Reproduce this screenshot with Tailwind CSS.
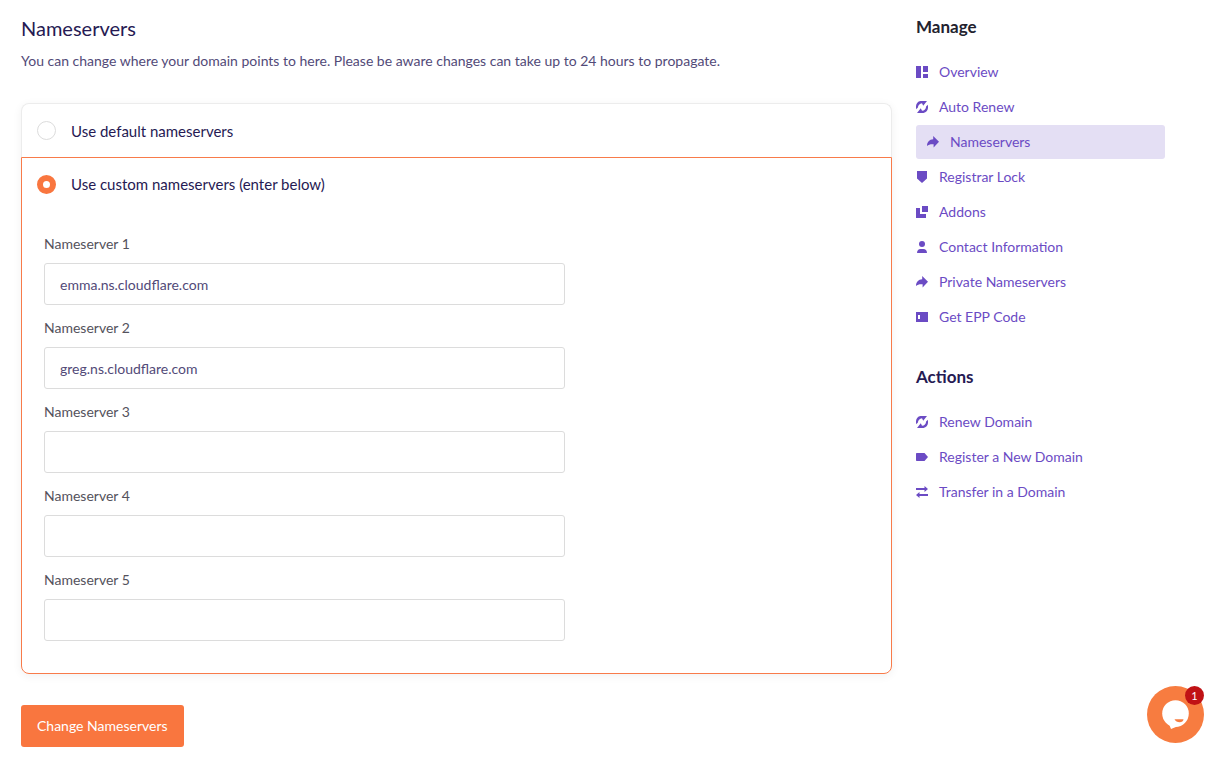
<!DOCTYPE html>
<html lang="en">
  <head>
    <meta charset="UTF-8" />
    <meta name="viewport" content="width=device-width, initial-scale=1.0" />
    <title>Nameservers</title>
    <script src="https://cdn.jsdelivr.net/npm/@tailwindcss/browser@4"></script>
  </head>
  <body class="bg-white font-['Lato','Open_Sans',sans-serif] text-sm leading-5 text-[#524a78]">
    <!-- shared icon shapes -->
    <svg class="hidden">
      <symbol id="icon-dashboard" viewBox="0 0 12 12">
        <path d="M0 0h5v12H0zM7 0h5v6H7zM7 8h5v4H7z" />
      </symbol>
      <symbol id="icon-renew" viewBox="0 0 12 12">
        <path d="M4.500 0H11L7.200 4.800 6 2.200C3.600 2.600 2 4.200 1.900 6.600L.3 8.200C-.8 4.200.8.600 4.500 0z" />
        <path d="M7.500 12H1l3.800-4.800L6 9.800c2.400-.4 4-2 4.100-4.400l1.600-1.600C12.800 7.800 11.200 11.400 7.500 12z" />
      </symbol>
      <symbol id="icon-share" viewBox="0 0 12 12">
        <path d="M6.200 0 12 5.800 6.600 11.500V8.200C3.800 8 1.600 8.300 0 10 0 6 2.400 3.300 6.200 3.200z" />
      </symbol>
      <symbol id="icon-shield" viewBox="0 0 12 12">
        <path d="M1 0h10V7.500L6 12 1 7.500z" />
      </symbol>
      <symbol id="icon-addons" viewBox="0 0 12 12">
        <path d="M6 0h6v6H6zM0 2h4v6h6v4H0z" />
      </symbol>
      <symbol id="icon-user" viewBox="0 0 12 12">
        <circle cx="6" cy="3" r="3" />
        <path d="M1 12c0-2.600 1.600-4 3.500-4h3C9.400 8 11 9.400 11 12z" />
      </symbol>
      <symbol id="icon-card" viewBox="0 0 12 12">
        <path fill-rule="evenodd" d="M0 1h12v10H0zM2 4v4h2V4z" />
      </symbol>
      <symbol id="icon-label" viewBox="0 0 12 12">
        <path d="M.6 2H8.500L12 6 8.500 10H.6L0 9.400V2.600z" />
      </symbol>
      <symbol id="icon-transfer" viewBox="0 0 12 12">
        <path d="M0 2h8.500V0L12 3 8.500 6V4H0zM12 8H3.500V6L0 9l3.500 3V10H12z" />
      </symbol>
    </svg>

    <div class="flex gap-6 pl-[21px] pr-[45px] pt-4 pb-[14px]">
      <main class="flex-1">
        <h1 class="text-xl leading-6 text-[#261a53]">Nameservers</h1>
        <p class="mt-[11px]">You can change where your domain points to here. Please be aware changes can take up to 24 hours to propagate.</p>

        <form class="mt-8">
          <div class="rounded-lg shadow-[0_2px_10px_rgba(0,0,0,0.06)]">
            <label class="flex h-[54px] items-center gap-[15px] rounded-t-lg border border-b-0 border-[#ececec] px-[15px] text-[15px] text-[#261a53]">
              <input type="radio" name="ns" class="size-[19px] appearance-none rounded-full border border-[#dcdcdc] bg-white" />
              Use default nameservers
            </label>

            <div class="rounded-b-lg border border-[#f87b4a] pb-8">
              <label class="flex h-[52px] items-center gap-[15px] px-[15px] text-[15px] text-[#261a53]">
                <input type="radio" name="ns" checked class="size-[19px] appearance-none rounded-full border-[6px] border-[#f9763f] bg-white" />
                Use custom nameservers (enter below)
              </label>

              <div class="mt-6 flex w-[62.5%] flex-col gap-[13px] pl-[22px]">
                <div>
                  <label for="ns1" class="block text-[#54525c]">Nameserver 1</label>
                  <input id="ns1" type="text" value="emma.ns.cloudflare.com" class="mt-[9px] block h-[42px] w-full rounded-[3px] border border-[#dcdcdc] px-[15px]" />
                </div>
                <div>
                  <label for="ns2" class="block text-[#54525c]">Nameserver 2</label>
                  <input id="ns2" type="text" value="greg.ns.cloudflare.com" class="mt-[9px] block h-[42px] w-full rounded-[3px] border border-[#dcdcdc] px-[15px]" />
                </div>
                <div>
                  <label for="ns3" class="block text-[#54525c]">Nameserver 3</label>
                  <input id="ns3" type="text" class="mt-[9px] block h-[42px] w-full rounded-[3px] border border-[#dcdcdc] px-[15px]" />
                </div>
                <div>
                  <label for="ns4" class="block text-[#54525c]">Nameserver 4</label>
                  <input id="ns4" type="text" class="mt-[9px] block h-[42px] w-full rounded-[3px] border border-[#dcdcdc] px-[15px]" />
                </div>
                <div>
                  <label for="ns5" class="block text-[#54525c]">Nameserver 5</label>
                  <input id="ns5" type="text" class="mt-[9px] block h-[42px] w-full rounded-[3px] border border-[#dcdcdc] px-[15px]" />
                </div>
              </div>
            </div>
          </div>

          <button type="submit" class="mt-[31px] h-[42px] rounded-[3px] bg-[#f9763f] px-4 text-white hover:bg-[#ee6830]">Change Nameservers</button>
        </form>
      </main>

      <aside class="w-[249px] shrink-0 text-[#6b4bc4]">
        <h2 class="text-[17px] leading-[22px] font-bold text-[#23222e]">Manage</h2>
        <nav class="mt-[17px] flex flex-col gap-px">
          <a href="#" class="flex h-[34px] items-center gap-[11px]"><svg class="size-3 fill-current"><use href="#icon-dashboard" /></svg>Overview</a>
          <a href="#" class="flex h-[34px] items-center gap-[11px]"><svg class="size-3 fill-current"><use href="#icon-renew" /></svg>Auto Renew</a>
          <a href="#" class="flex h-[34px] items-center gap-[11px] rounded-[3px] bg-[#e4dff4] px-[11px]"><svg class="size-3 fill-current"><use href="#icon-share" /></svg>Nameservers</a>
          <a href="#" class="flex h-[34px] items-center gap-[11px]"><svg class="size-3 fill-current"><use href="#icon-shield" /></svg>Registrar Lock</a>
          <a href="#" class="flex h-[34px] items-center gap-[11px]"><svg class="size-3 fill-current"><use href="#icon-addons" /></svg>Addons</a>
          <a href="#" class="flex h-[34px] items-center gap-[11px]"><svg class="size-3 fill-current"><use href="#icon-user" /></svg>Contact Information</a>
          <a href="#" class="flex h-[34px] items-center gap-[11px]"><svg class="size-3 fill-current"><use href="#icon-share" /></svg>Private Nameservers</a>
          <a href="#" class="flex h-[34px] items-center gap-[11px]"><svg class="size-3 fill-current"><use href="#icon-card" /></svg>Get EPP Code</a>
        </nav>

        <h2 class="mt-8 text-[17px] leading-[22px] font-bold text-[#261a53]">Actions</h2>
        <nav class="mt-[17px] flex flex-col gap-px">
          <a href="#" class="flex h-[34px] items-center gap-[11px]"><svg class="size-3 fill-current"><use href="#icon-renew" /></svg>Renew Domain</a>
          <a href="#" class="flex h-[34px] items-center gap-[11px]"><svg class="size-3 fill-current"><use href="#icon-label" /></svg>Register a New Domain</a>
          <a href="#" class="flex h-[34px] items-center gap-[11px]"><svg class="size-3 fill-current"><use href="#icon-transfer" /></svg>Transfer in a Domain</a>
        </nav>
      </aside>
    </div>

    <!-- chat launcher -->
    <button type="button" aria-label="Open chat" class="fixed right-[6px] bottom-[18px] size-[57px] rounded-full bg-[#f77c40]">
      <svg viewBox="0 0 57 57" class="size-full">
        <circle cx="28.500" cy="27.500" r="13.300" fill="#fff" />
        <path fill="#fff" d="M22 38l2 5 11-4.500-2-4z" />
        <path fill="#f77c40" d="M27.500 33.200h9c0 4-7.500 4-9 0z" />
      </svg>
      <span class="absolute right-0 top-0 flex size-[19px] items-center justify-center rounded-full bg-[#c01215] text-[11px] leading-none text-white">1</span>
    </button>
  </body>
</html>
